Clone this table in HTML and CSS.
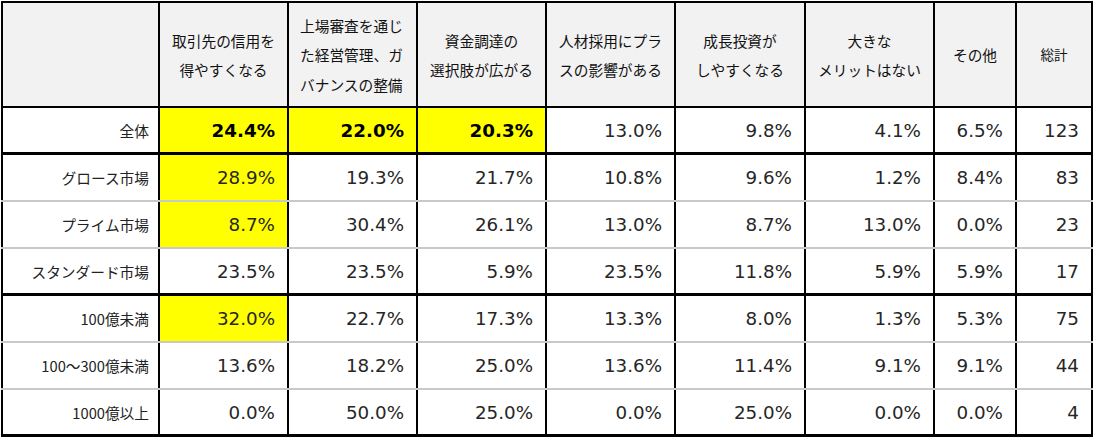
FILE: index.html
```html
<!DOCTYPE html>
<html lang="ja">
<head>
<meta charset="utf-8">
<link rel="stylesheet" href="styles.css">
</head>
<body>
<table class="tbl">
  <colgroup>
    <col class="c-label">
    <col class="c-n">
    <col class="c-n">
    <col class="c-n">
    <col class="c-n">
    <col class="c-n5">
    <col class="c-n">
    <col class="c-other">
    <col class="c-total">
  </colgroup>
  <thead>
    <tr class="head">
      <th></th>
      <th>取引先の信用を<br>得やすくなる</th>
      <th class="left">上場審査を通じ<br>た経営管理、ガ<br>バナンスの整備</th>
      <th>資金調達の<br>選択肢が広がる</th>
      <th>人材採用にプラ<br>スの影響がある</th>
      <th>成長投資が<br>しやすくなる</th>
      <th>大きな<br>メリットはない</th>
      <th>その他</th>
      <th class="small">総計</th>
    </tr>
  </thead>
  <tbody class="grp">
    <tr class="row last">
      <td class="lab">全体</td>
      <td class="hl b">24.4%</td>
      <td class="hl b">22.0%</td>
      <td class="hl b">20.3%</td>
      <td>13.0%</td>
      <td>9.8%</td>
      <td>4.1%</td>
      <td>6.5%</td>
      <td>123</td>
    </tr>
  </tbody>
  <tbody class="grp">
    <tr class="row">
      <td class="lab">グロース市場</td>
      <td class="hl">28.9%</td>
      <td>19.3%</td>
      <td>21.7%</td>
      <td>10.8%</td>
      <td>9.6%</td>
      <td>1.2%</td>
      <td>8.4%</td>
      <td>83</td>
    </tr>
    <tr class="row">
      <td class="lab">プライム市場</td>
      <td class="hl">8.7%</td>
      <td>30.4%</td>
      <td>26.1%</td>
      <td>13.0%</td>
      <td>8.7%</td>
      <td>13.0%</td>
      <td>0.0%</td>
      <td>23</td>
    </tr>
    <tr class="row last">
      <td class="lab">スタンダード市場</td>
      <td>23.5%</td>
      <td>23.5%</td>
      <td>5.9%</td>
      <td>23.5%</td>
      <td>11.8%</td>
      <td>5.9%</td>
      <td>5.9%</td>
      <td>17</td>
    </tr>
  </tbody>
  <tbody class="grp">
    <tr class="row">
      <td class="lab">100億未満</td>
      <td class="hl">32.0%</td>
      <td>22.7%</td>
      <td>17.3%</td>
      <td>13.3%</td>
      <td>8.0%</td>
      <td>1.3%</td>
      <td>5.3%</td>
      <td>75</td>
    </tr>
    <tr class="row">
      <td class="lab">100～300億未満</td>
      <td>13.6%</td>
      <td>18.2%</td>
      <td>25.0%</td>
      <td>13.6%</td>
      <td>11.4%</td>
      <td>9.1%</td>
      <td>9.1%</td>
      <td>44</td>
    </tr>
    <tr class="row last">
      <td class="lab">1000億以上</td>
      <td>0.0%</td>
      <td>50.0%</td>
      <td>25.0%</td>
      <td>0.0%</td>
      <td>25.0%</td>
      <td>0.0%</td>
      <td>0.0%</td>
      <td>4</td>
    </tr>
  </tbody>
</table>
</body>
</html>
```

FILE: styles.css
```css
html, body {
  margin: 0;
  padding: 0;
  background: #ffffff;
}
body {
  padding: 1px 0 0 1px;
}
.tbl {
  border-collapse: collapse;
  table-layout: fixed;
  width: 1091px;
  font-family: "DejaVu Sans", "Noto Sans CJK JP", sans-serif;
  color: #262626;
}
.c-label { width: 157px; }
.c-n { width: 129px; }
.c-n5 { width: 130px; }
.c-other { width: 82px; }
.c-total { width: 76px; }

.tbl th, .tbl td {
  border-left: 2px solid #000;
  border-right: 2px solid #000;
  padding: 0;
}
.head th {
  height: 102px;
  background: #f2f2f2;
  border-top: 2px solid #000;
  border-bottom: 2px solid #000;
  font-family: "Noto Sans CJK JP", sans-serif;
  font-weight: normal;
  font-size: 14.7px;
  line-height: 29.5px;
  color: #111;
  text-align: center;
  vertical-align: middle;
  padding-top: 1px;
}
.head th.left {
  text-align: left;
  padding-left: 11px;
}
.head th.small {
  font-size: 13.5px;
}
.row td {
  height: 45px;
  border-bottom: 2px solid #c9c9c9;
  font-size: 18.3px;
  text-align: right;
  padding-right: 12px;
  vertical-align: middle;
}
.row.last td {
  height: 44px;
  border-bottom: 3px solid #000;
}
.row td.lab {
  font-family: "Noto Sans CJK JP", sans-serif;
  font-size: 14.7px;
  padding-right: 9px;
  color: #222;
}
.row td.hl {
  background: #ffff00;
}
.row td.b {
  font-weight: bold;
  color: #000;
}
```
